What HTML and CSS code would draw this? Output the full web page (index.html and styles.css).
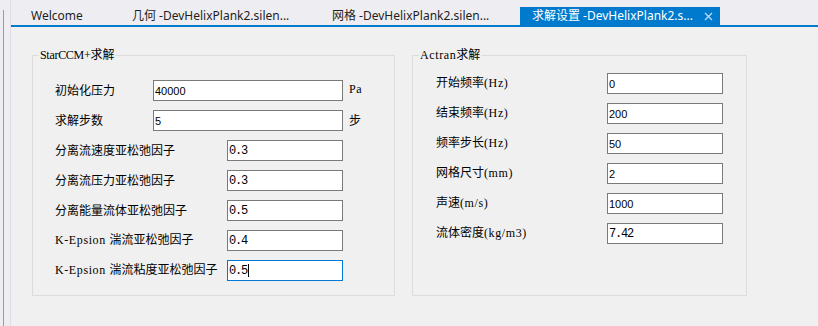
FILE: index.html
```html
<!DOCTYPE html>
<html lang="zh-CN">
<head>
<meta charset="utf-8">
<title>求解设置</title>
<link rel="stylesheet" href="styles.css">
</head>
<body>
<div class="window">
  <div class="side"><div class="side-line"></div></div>
  <div class="main">
    <div class="tabstrip">
      <div class="tab tab-first">Welcome</div>
      <div class="tab">几何 -DevHelixPlank2.silen...</div>
      <div class="tab">网格 -DevHelixPlank2.silen...</div>
      <div class="tab active">求解设置 -DevHelixPlank2.s...
        <svg class="close" width="9" height="9" viewBox="0 0 9 9"><path d="M1 1L8 8M8 1L1 8" stroke="currentColor" stroke-width="1.4"/></svg>
      </div>
    </div>
    <div class="tabline"></div>
    <div class="content">
      <div class="group group-left">
        <span class="group-title"><span class="ss ss-tight">StarCCM+</span>求解</span>
        <div class="row">
          <span class="label label-short">初始化压力</span>
          <div class="field field-wide">40000</div>
          <span class="unit ss">Pa</span>
        </div>
        <div class="row">
          <span class="label label-short">求解步数</span>
          <div class="field field-wide">5</div>
          <span class="unit">步</span>
        </div>
        <div class="row">
          <span class="label label-long">分离流速度亚松弛因子</span>
          <div class="field ssv">0.3</div>
        </div>
        <div class="row">
          <span class="label label-long">分离流压力亚松弛因子</span>
          <div class="field ssv">0.3</div>
        </div>
        <div class="row">
          <span class="label label-long">分离能量流体亚松弛因子</span>
          <div class="field ssv">0.5</div>
        </div>
        <div class="row">
          <span class="label label-long"><span class="ss">K-Epsion </span>湍流亚松弛因子</span>
          <div class="field ssv">0.4</div>
        </div>
        <div class="row">
          <span class="label label-long"><span class="ss">K-Epsion </span>湍流粘度亚松弛因子</span>
          <div class="field ssv focused">0.5<span class="caret"></span></div>
        </div>
      </div>
      <div class="group group-right">
        <span class="group-title"><span class="ss">Actran</span>求解</span>
        <div class="row">
          <span class="label label-right">开始频率<span class="ss">(Hz)</span></span>
          <div class="field">0</div>
        </div>
        <div class="row">
          <span class="label label-right">结束频率<span class="ss">(Hz)</span></span>
          <div class="field">200</div>
        </div>
        <div class="row">
          <span class="label label-right">频率步长<span class="ss">(Hz)</span></span>
          <div class="field">50</div>
        </div>
        <div class="row">
          <span class="label label-right">网格尺寸<span class="ss">(mm)</span></span>
          <div class="field">2</div>
        </div>
        <div class="row">
          <span class="label label-right">声速<span class="ss">(m/s)</span></span>
          <div class="field">1000</div>
        </div>
        <div class="row">
          <span class="label label-right">流体密度<span class="ss">(kg/m3)</span></span>
          <div class="field ssv">7.42</div>
        </div>
      </div>
    </div>
  </div>
</div>
</body>
</html>
```

FILE: styles.css
```css
* { box-sizing: border-box; }
html, body { margin: 0; padding: 0; }
body {
  background: #eeeef2;
  font-family: "Noto Sans CJK SC", "Noto Sans", sans-serif;
  font-size: 12px;
  color: #000;
  width: 818px;
  height: 326px;
  overflow: hidden;
}
.window { display: flex; height: 326px; }
.side {
  width: 11px;
  padding-top: 10px;
  background: #eeeef2;
  border-right: 1px solid #dedee4;
}
.side-line { margin-left: 3px; width: 1px; height: 100%; background: #9a9a9a; }
.main { flex: 1; display: flex; flex-direction: column; }
.tabstrip {
  height: 25px;
  display: flex;
  align-items: flex-end;
  background: #eeeef2;
  font-family: "Noto Sans", "Noto Sans CJK SC", sans-serif;
  font-size: 12px;
  color: #1e1e1e;
}
.tab {
  height: 18px;
  width: 200px;
  padding-left: 12px;
  display: flex;
  align-items: center;
  white-space: nowrap;
  line-height: 18px;
}
.tab-first { width: 109px; padding-left: 20px; }
.tab.active { background: #007acc; color: #fff; }
.close { color: #b7d6ef; margin-left: auto; margin-right: 7px; }
.tabline { height: 2px; background: #007acc; }
.content {
  flex: 1;
  background: #f0f0f0;
  display: flex;
  gap: 17px;
  padding: 28px 0 0 21px;
}
.group {
  position: relative;
  border: 1px solid #dcdcdc;
  height: 241px;
  display: flex;
  flex-direction: column;
  gap: 9px;
}
.group-left { width: 363px; padding: 24px 0 0 22px; }
.group-right { width: 335px; padding: 17px 0 0 23px; }
.group-title {
  position: absolute;
  top: -10px;
  left: 6px;
  padding: 0 1px;
  background: #f0f0f0;
  line-height: 16px;
  white-space: nowrap;
}
.ss {
  font-family: "Liberation Serif", serif;
  font-size: 12px;
  letter-spacing: 0.6px;
}
.ss-tight { letter-spacing: -0.3px; }
.row { display: flex; align-items: center; height: 21px; }
.label { white-space: nowrap; line-height: 16px; padding-bottom: 2px; }
.label-short { width: 98px; }
.label-long { width: 172px; }
.label-right { width: 171px; }
.field {
  width: 116px;
  height: 21px;
  background: #fff;
  border: 1px solid #7a7a7a;
  padding-left: 1px;
  font-family: "Liberation Sans", Arial, sans-serif;
  font-size: 11px;
  line-height: 18px;
  display: flex;
  align-items: center;
}
.field-wide { width: 190px; }
.ssv {
  font-family: "Liberation Mono", monospace;
  font-size: 12px;
  letter-spacing: -1.2px;
}
.focused { border-color: #0078d7; }
.caret { display: inline-block; width: 1px; height: 13px; background: #000; margin-left: 1px; }
.unit { margin-left: 6px; padding-bottom: 2px; }
```
